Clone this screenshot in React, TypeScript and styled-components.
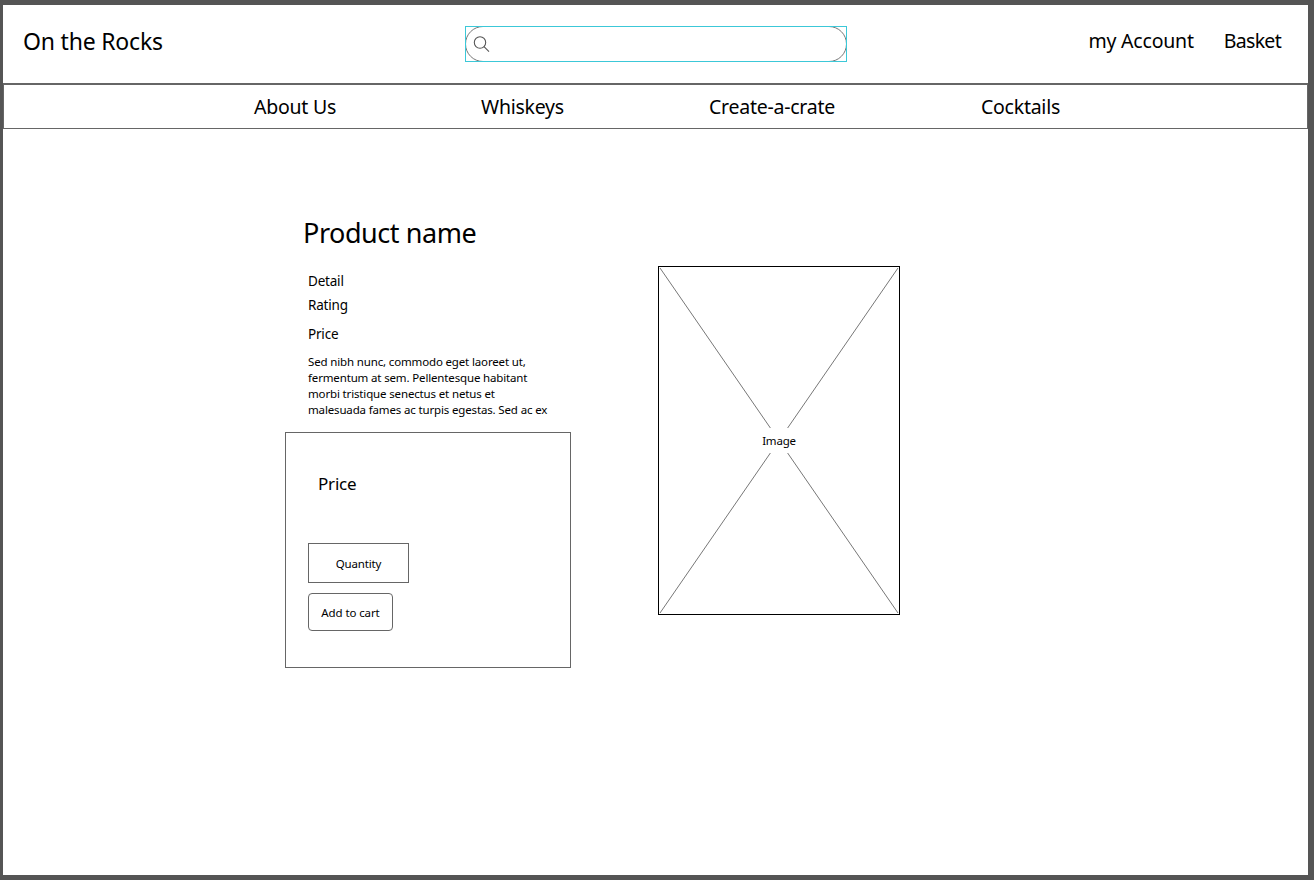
import React, { FC } from 'react';
import styled, { createGlobalStyle } from 'styled-components';

const GlobalStyle = createGlobalStyle`
  html, body {
    margin: 0;
    padding: 0;
    background: #fff;
  }
  body {
    font-family: 'Noto Sans', 'Open Sans', Arial, sans-serif;
    color: #000;
  }
`;

const Frame = styled.div`
  box-sizing: border-box;
  width: 1314px;
  height: 880px;
  border-style: solid;
  border-color: #555;
  border-width: 5px 6px 5px 3px;
  overflow: hidden;
  background: #fff;
`;

const Header = styled.header`
  box-sizing: border-box;
  height: 80px;
  display: flex;
  align-items: center;
  padding: 0 27px 0 20px;
  border-bottom: 2px solid #666;
`;

const Logo = styled.div`
  flex: none;
  width: 442px;
  font-size: 23px;
  line-height: 32px;
  letter-spacing: -0.2px;
  margin-top: -6px;
`;

const SearchWrap = styled.div`
  position: relative;
  flex: none;
  box-sizing: border-box;
  width: 382px;
  height: 36px;
  margin-top: -1px;

  &::after {
    content: '';
    position: absolute;
    inset: 0;
    border: 1px solid #3cc8d8;
    pointer-events: none;
  }
`;

const SearchPill = styled.div`
  box-sizing: border-box;
  height: 100%;
  display: flex;
  align-items: center;
  padding-left: 7px;
  border: 1px solid #777;
  border-radius: 18px;
`;

const AccountLinks = styled.div`
  display: flex;
  gap: 30px;
  margin: -6px 0 0 auto;
  font-size: 19.5px;
  line-height: 28px;
`;

const AccountLink = styled.span<{ $tight?: boolean }>`
  letter-spacing: ${(p) => (p.$tight ? '-0.7px' : '-0.2px')};
`;

const Nav = styled.nav`
  box-sizing: border-box;
  height: 44px;
  display: flex;
  align-items: center;
  padding-left: 250px;
  border: solid #666;
  border-width: 0 1px 1px;
  font-size: 19.5px;
  letter-spacing: -0.25px;
`;

const NavItem = styled.a<{ $width: number }>`
  width: ${(p) => p.$width}px;
  flex: none;
  line-height: 28px;
`;

const Main = styled.main`
  display: flex;
  gap: 87px;
  padding-left: 282px;
`;

const InfoColumn = styled.section`
  width: 286px;
  padding-top: 84px;
`;

const Title = styled.h1`
  margin: 0 0 18px 18px;
  font-size: 27px;
  font-weight: 400;
  line-height: 40px;
  letter-spacing: -0.45px;
`;

const Meta = styled.div<{ $gap: number }>`
  margin: 0 0 ${(p) => p.$gap}px 23px;
  font-size: 13.5px;
  line-height: 20px;
  letter-spacing: -0.2px;
`;

const Description = styled.p`
  margin: 10px 0 14px 23px;
  font-size: 11.5px;
  line-height: 16px;
  letter-spacing: -0.15px;
  white-space: nowrap;
`;

const BuyBox = styled.div`
  box-sizing: border-box;
  height: 236px;
  padding: 39px 0 0 22px;
  border: 1px solid #666;
`;

const BoxPrice = styled.div`
  margin-left: 10px;
  font-size: 17px;
  line-height: 24px;
  letter-spacing: -0.2px;
`;

const QuantityField = styled.div`
  box-sizing: border-box;
  width: 101px;
  height: 40px;
  margin-top: 47px;
  display: flex;
  align-items: center;
  justify-content: center;
  border: 1px solid #666;
  font-size: 11.5px;
  letter-spacing: -0.15px;
`;

const AddButton = styled.button`
  box-sizing: border-box;
  display: block;
  width: 85px;
  height: 38px;
  margin-top: 10px;
  padding: 0;
  background: #fff;
  color: #000;
  border: 1px solid #666;
  border-radius: 4px;
  font-family: inherit;
  font-size: 11.5px;
  letter-spacing: -0.1px;
`;

const ImagePlaceholder = styled.div`
  position: relative;
  box-sizing: border-box;
  width: 242px;
  height: 349px;
  margin-top: 137px;
  border: 1px solid #000;
  display: flex;
  align-items: center;
  justify-content: center;
`;

const Cross = styled.svg`
  position: absolute;
  inset: 0;
`;

const ImageLabel = styled.span`
  position: relative;
  padding: 0 2px;
  background: #fff;
  font-size: 11.5px;
  line-height: 25px;
  letter-spacing: -0.2px;
`;

const SearchIcon: FC = () => (
  <svg width="18" height="18" viewBox="0 0 18 18" fill="none" stroke="#555" strokeWidth="1.1">
    <circle cx="7" cy="7.5" r="5.7" />
    <path d="M11 11.6 L16 16.6" />
  </svg>
);

const navItems = [
  { label: 'About Us', width: 227 },
  { label: 'Whiskeys', width: 228 },
  { label: 'Create-a-crate', width: 272 },
  { label: 'Cocktails', width: 100 },
];

const App: FC = () => {
  return (
    <>
      <GlobalStyle />
      <Frame>
        <Header>
          <Logo>On the Rocks</Logo>
          <SearchWrap>
            <SearchPill>
              <SearchIcon />
            </SearchPill>
          </SearchWrap>
          <AccountLinks>
            <AccountLink>my Account</AccountLink>
            <AccountLink $tight>Basket</AccountLink>
          </AccountLinks>
        </Header>
        <Nav>
          {navItems.map((item) => (
            <NavItem key={item.label} $width={item.width}>
              {item.label}
            </NavItem>
          ))}
        </Nav>
        <Main>
          <InfoColumn>
            <Title>Product name</Title>
            <Meta $gap={4}>Detail</Meta>
            <Meta $gap={9}>Rating</Meta>
            <Meta $gap={0}>Price</Meta>
            <Description>
              Sed nibh nunc, commodo eget laoreet ut,
              <br />
              fermentum at sem. Pellentesque habitant
              <br />
              morbi tristique senectus et netus et
              <br />
              malesuada fames ac turpis egestas. Sed ac ex
            </Description>
            <BuyBox>
              <BoxPrice>Price</BoxPrice>
              <QuantityField>Quantity</QuantityField>
              <AddButton>Add to cart</AddButton>
            </BuyBox>
          </InfoColumn>
          <ImagePlaceholder>
            <Cross width="240" height="347" viewBox="0 0 240 347" stroke="#777" strokeWidth="1">
              <line x1="1" y1="1" x2="239" y2="346" />
              <line x1="239" y1="1" x2="1" y2="346" />
            </Cross>
            <ImageLabel>Image</ImageLabel>
          </ImagePlaceholder>
        </Main>
      </Frame>
    </>
  );
};

export default App;
